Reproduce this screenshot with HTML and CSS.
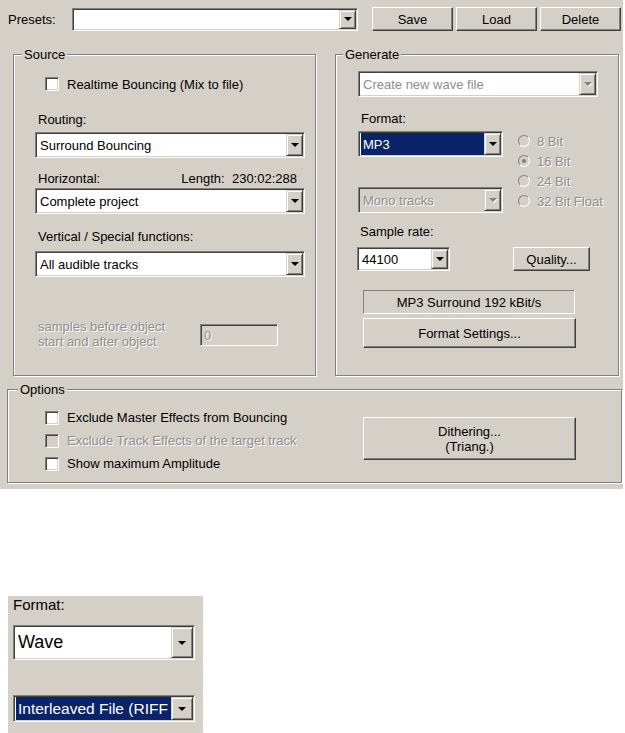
FILE: index.html
```html
<!DOCTYPE html>
<html>
<head>
<meta name="viewport" content="width=device-width, initial-scale=1">
<link rel="stylesheet" href="styles.css">
</head>
<body>

<div class="dialog">

  <div class="presets-row">
    <span class="presets-label">Presets:</span>
    <div class="combo presets-combo">
      <span class="combo-text"></span>
      <span class="combo-btn"><i class="arrow"></i></span>
    </div>
    <button class="btn preset-btn first">Save</button>
    <button class="btn preset-btn">Load</button>
    <button class="btn preset-btn">Delete</button>
  </div>

  <div class="groups">
    <fieldset class="group source">
      <legend>Source</legend>
      <div class="group-body">

        <label class="check realtime"><span class="box"></span>Realtime Bouncing (Mix to file)</label>

        <div class="field-label routing-label">Routing:</div>
        <div class="combo wide">
          <span class="combo-text">Surround Bouncing</span>
          <span class="combo-btn"><i class="arrow"></i></span>
        </div>

        <div class="field-label split-label">
          <span>Horizontal:</span>
          <span>Length:&nbsp;&nbsp;230:02:288</span>
        </div>
        <div class="combo wide">
          <span class="combo-text">Complete project</span>
          <span class="combo-btn"><i class="arrow"></i></span>
        </div>

        <div class="field-label vertical-label">Vertical / Special functions:</div>
        <div class="combo wide">
          <span class="combo-text">All audible tracks</span>
          <span class="combo-btn"><i class="arrow"></i></span>
        </div>

        <div class="samples-row">
          <div class="disabled-text samples-text">samples before object<br>start and after object</div>
          <div class="edit disabled-edit"><span class="disabled-text">0</span></div>
        </div>
      </div>
    </fieldset>

    <fieldset class="group generate">
      <legend>Generate</legend>
      <div class="group-body">

        <div class="combo gen-wide">
          <span class="combo-text disabled-text">Create new wave file</span>
          <span class="combo-btn"><i class="arrow off"></i></span>
        </div>

        <div class="field-label format-label">Format:</div>
        <div class="format-grid">
          <div class="format-combos">
            <div class="combo format-combo">
              <span class="combo-text"><span class="selected">MP3</span></span>
              <span class="combo-btn"><i class="arrow"></i></span>
            </div>
            <div class="combo format-combo grey-combo">
              <span class="combo-text disabled-text">Mono tracks</span>
              <span class="combo-btn"><i class="arrow off"></i></span>
            </div>
          </div>
          <div class="radios">
            <div class="radio"><span class="dot"></span><span class="disabled-text">8 Bit</span></div>
            <div class="radio"><span class="dot on"></span><span class="disabled-text">16 Bit</span></div>
            <div class="radio"><span class="dot"></span><span class="disabled-text">24 Bit</span></div>
            <div class="radio"><span class="dot"></span><span class="disabled-text">32 Bit Float</span></div>
          </div>
        </div>

        <div class="field-label rate-label">Sample rate:</div>
        <div class="rate-row">
          <div class="combo rate-combo">
            <span class="combo-text">44100</span>
            <span class="combo-btn"><i class="arrow"></i></span>
          </div>
          <button class="btn quality-btn">Quality...</button>
        </div>

        <div class="static-box">MP3 Surround 192 kBit/s</div>
        <button class="btn settings-btn">Format Settings...</button>
      </div>
    </fieldset>
  </div>

  <fieldset class="group options">
    <legend>Options</legend>
    <div class="options-body">
      <div class="option-checks">
        <label class="check"><span class="box"></span>Exclude Master Effects from Bouncing</label>
        <label class="check"><span class="box off"></span><span class="disabled-text">Exclude Track Effects of the target track</span></label>
        <label class="check"><span class="box"></span>Show maximum Amplitude</label>
      </div>
      <button class="btn dither-btn">Dithering...<br>(Triang.)</button>
    </div>
  </fieldset>

</div>

<div class="zoom-panel">
  <div class="zoom-label">Format:</div>
  <div class="combo wave-combo">
    <span class="combo-text">Wave</span>
    <span class="combo-btn"><i class="arrow"></i></span>
  </div>
  <div class="combo riff-combo">
    <span class="combo-text"><span class="selected">Interleaved File (RIFF</span></span>
    <span class="combo-btn"><i class="arrow"></i></span>
  </div>
</div>

</body>
</html>
```

FILE: styles.css
```css
body {
  margin: 0;
  background: #fff;
  font-family: "Liberation Sans", Arial, sans-serif;
  font-size: 13px;
  color: #000;
}

.dialog {
  width: 623px;
  height: 489px;
  padding-top: 7px;
  box-sizing: border-box;
  background: #d4d0c8;
}

/* 3d borders */
.btn {
  font: inherit;
  color: #000;
  background: #d4d0c8;
  border: 1px solid;
  border-color: #fff #404040 #404040 #fff;
  box-shadow: inset -1px -1px #808080;
  padding: 0;
  box-sizing: border-box;
}

.combo, .edit {
  display: flex;
  box-sizing: border-box;
  background: #fff;
  border: 1px solid;
  border-color: #808080 #fff #fff #808080;
  box-shadow: inset 1px 1px #404040, inset -1px -1px #d4d0c8;
  padding: 1px;
}

.combo-text {
  flex: 1;
  min-width: 0;
  display: flex;
  align-items: center;
  padding-left: 3px;
  overflow: hidden;
  white-space: nowrap;
}

.combo-btn {
  width: 17px;
  flex-shrink: 0;
  box-sizing: border-box;
  display: flex;
  align-items: center;
  justify-content: center;
  background: #d4d0c8;
  border: 1px solid;
  border-color: #d4d0c8 #404040 #404040 #d4d0c8;
  box-shadow: inset 1px 1px #fff, inset -1px -1px #808080;
}

.arrow {
  width: 0;
  height: 0;
  border-left: 4px solid transparent;
  border-right: 4px solid transparent;
  border-top: 4px solid #000;
}

.arrow.off {
  border-top-color: #808080;
  filter: drop-shadow(1px 1px 0 #fff);
}

.selected {
  background: #0a246a;
  color: #fff;
  align-self: stretch;
  display: flex;
  align-items: center;
  padding: 0 2px;
  margin-left: -2px;
  flex: 1;
}

.disabled-text {
  color: #8e8e8e;
  text-shadow: 1px 1px 0 #fff;
}

/* presets */
.presets-row {
  display: flex;
  align-items: center;
  height: 24px;
  margin-left: 8px;
}

.presets-label {
  width: 64px;
}

.presets-combo {
  width: 286px;
  height: 23px;
}

.preset-btn {
  width: 81px;
  height: 24px;
  margin-left: 3px;
}

.preset-btn.first {
  margin-left: 14px;
}

/* group boxes */
.group {
  margin: 0;
  padding: 0;
  box-sizing: border-box;
  border: 1px solid #808080;
  box-shadow: inset 1px 1px #fff, 1px 1px #fff;
  min-width: 0;
}

.group legend {
  background: #d4d0c8;
  padding: 0 2px;
  line-height: 15px;
}

.source legend { margin-left: 8px; }
.generate legend { margin-left: 7px; }
.options legend { margin-left: 10px; }

.groups {
  display: flex;
  gap: 19px;
  margin: 16px 0 0 13px;
}

.source {
  width: 303px;
  height: 329px;
}

.source .group-body {
  padding: 0 9px 0 21px;
}

.generate {
  width: 284px;
  height: 329px;
}

.generate .group-body {
  padding-left: 22px;
}

.field-label {
  line-height: 15px;
  padding-left: 3px;
  margin-bottom: 5px;
}

/* source */
.check {
  display: flex;
  align-items: center;
  gap: 8px;
  height: 16px;
}

.box {
  width: 14px;
  height: 14px;
  box-sizing: border-box;
  background: #fff;
  border: 1px solid;
  border-color: #808080 #fff #fff #808080;
  box-shadow: inset 1px 1px #404040, inset -1px -1px #d4d0c8;
}

.box.off {
  background: #d4d0c8;
}

.realtime {
  margin: 14px 0 0 10px;
}

.routing-label {
  margin-top: 20px;
}

.wide {
  width: 270px;
  height: 26px;
}

.split-label {
  display: flex;
  justify-content: space-between;
  padding-right: 9px;
  margin-top: 13px;
  margin-bottom: 2px;
}

.vertical-label {
  margin-top: 15px;
  margin-bottom: 7px;
}

.samples-row {
  display: flex;
  align-items: flex-start;
  margin-top: 42px;
}

.samples-text {
  width: 162px;
  line-height: 15px;
  padding-left: 3px;
}

.disabled-edit {
  width: 78px;
  height: 22px;
  margin-top: 5px;
  background: #d4d0c8;
  align-items: center;
  padding-left: 3px;
}

/* generate */
.gen-wide {
  width: 240px;
  height: 26px;
  margin-top: 9px;
}

.format-label {
  margin-top: 14px;
}

.format-grid {
  display: flex;
  gap: 15px;
}

.format-combos {
  display: flex;
  flex-direction: column;
  gap: 30px;
}

.format-combo {
  width: 145px;
  height: 26px;
}

.grey-combo {
  background: #d4d0c8;
}

.radios {
  display: flex;
  flex-direction: column;
}

.radio {
  display: flex;
  align-items: center;
  gap: 7px;
  height: 20px;
}

.dot {
  width: 12px;
  height: 12px;
  box-sizing: border-box;
  border-radius: 50%;
  border: 1px solid;
  border-color: #808080 #fff #fff #808080;
  background: #d4d0c8;
  display: flex;
  align-items: center;
  justify-content: center;
}

.dot.on::after {
  content: "";
  width: 4px;
  height: 4px;
  border-radius: 50%;
  background: #808080;
}

.rate-label {
  margin-top: 11px;
  margin-left: -1px;
  margin-bottom: 8px;
}

.rate-row {
  display: flex;
  align-items: center;
  margin-left: -1px;
}

.rate-combo {
  width: 93px;
  height: 24px;
}

.quality-btn {
  width: 77px;
  height: 24px;
  margin-left: 63px;
}

.static-box {
  width: 212px;
  height: 24px;
  margin: 19px 0 0 5px;
  box-sizing: border-box;
  border: 1px solid;
  border-color: #808080 #fff #fff #808080;
  display: flex;
  align-items: center;
  justify-content: center;
}

.settings-btn {
  display: block;
  width: 213px;
  height: 30px;
  margin: 4px 0 0 5px;
}

/* options */
.options {
  width: 615px;
  height: 101px;
  margin: 6px 0 0 7px;
}

.options-body {
  display: flex;
}

.option-checks {
  width: 318px;
  padding-left: 37px;
  padding-top: 9px;
}

.option-checks .check {
  height: 23px;
}

.dither-btn {
  width: 213px;
  height: 43px;
  margin-top: 20px;
  line-height: 15px;
}

/* zoomed inset */
.zoom-panel {
  width: 195px;
  height: 137px;
  margin: 107px 0 0 8px;
  background: #d4d0c8;
  padding: 0 0 0 5px;
  box-sizing: border-box;
  font-size: 15px;
}

.zoom-label {
  line-height: 17px;
}

.wave-combo {
  width: 182px;
  height: 35px;
  margin-top: 12px;
  font-size: 18px;
}

.wave-combo .combo-btn,
.riff-combo .combo-btn {
  width: 22px;
}

.riff-combo {
  width: 182px;
  height: 27px;
  margin-top: 35px;
  font-size: 15.5px;
}
```
